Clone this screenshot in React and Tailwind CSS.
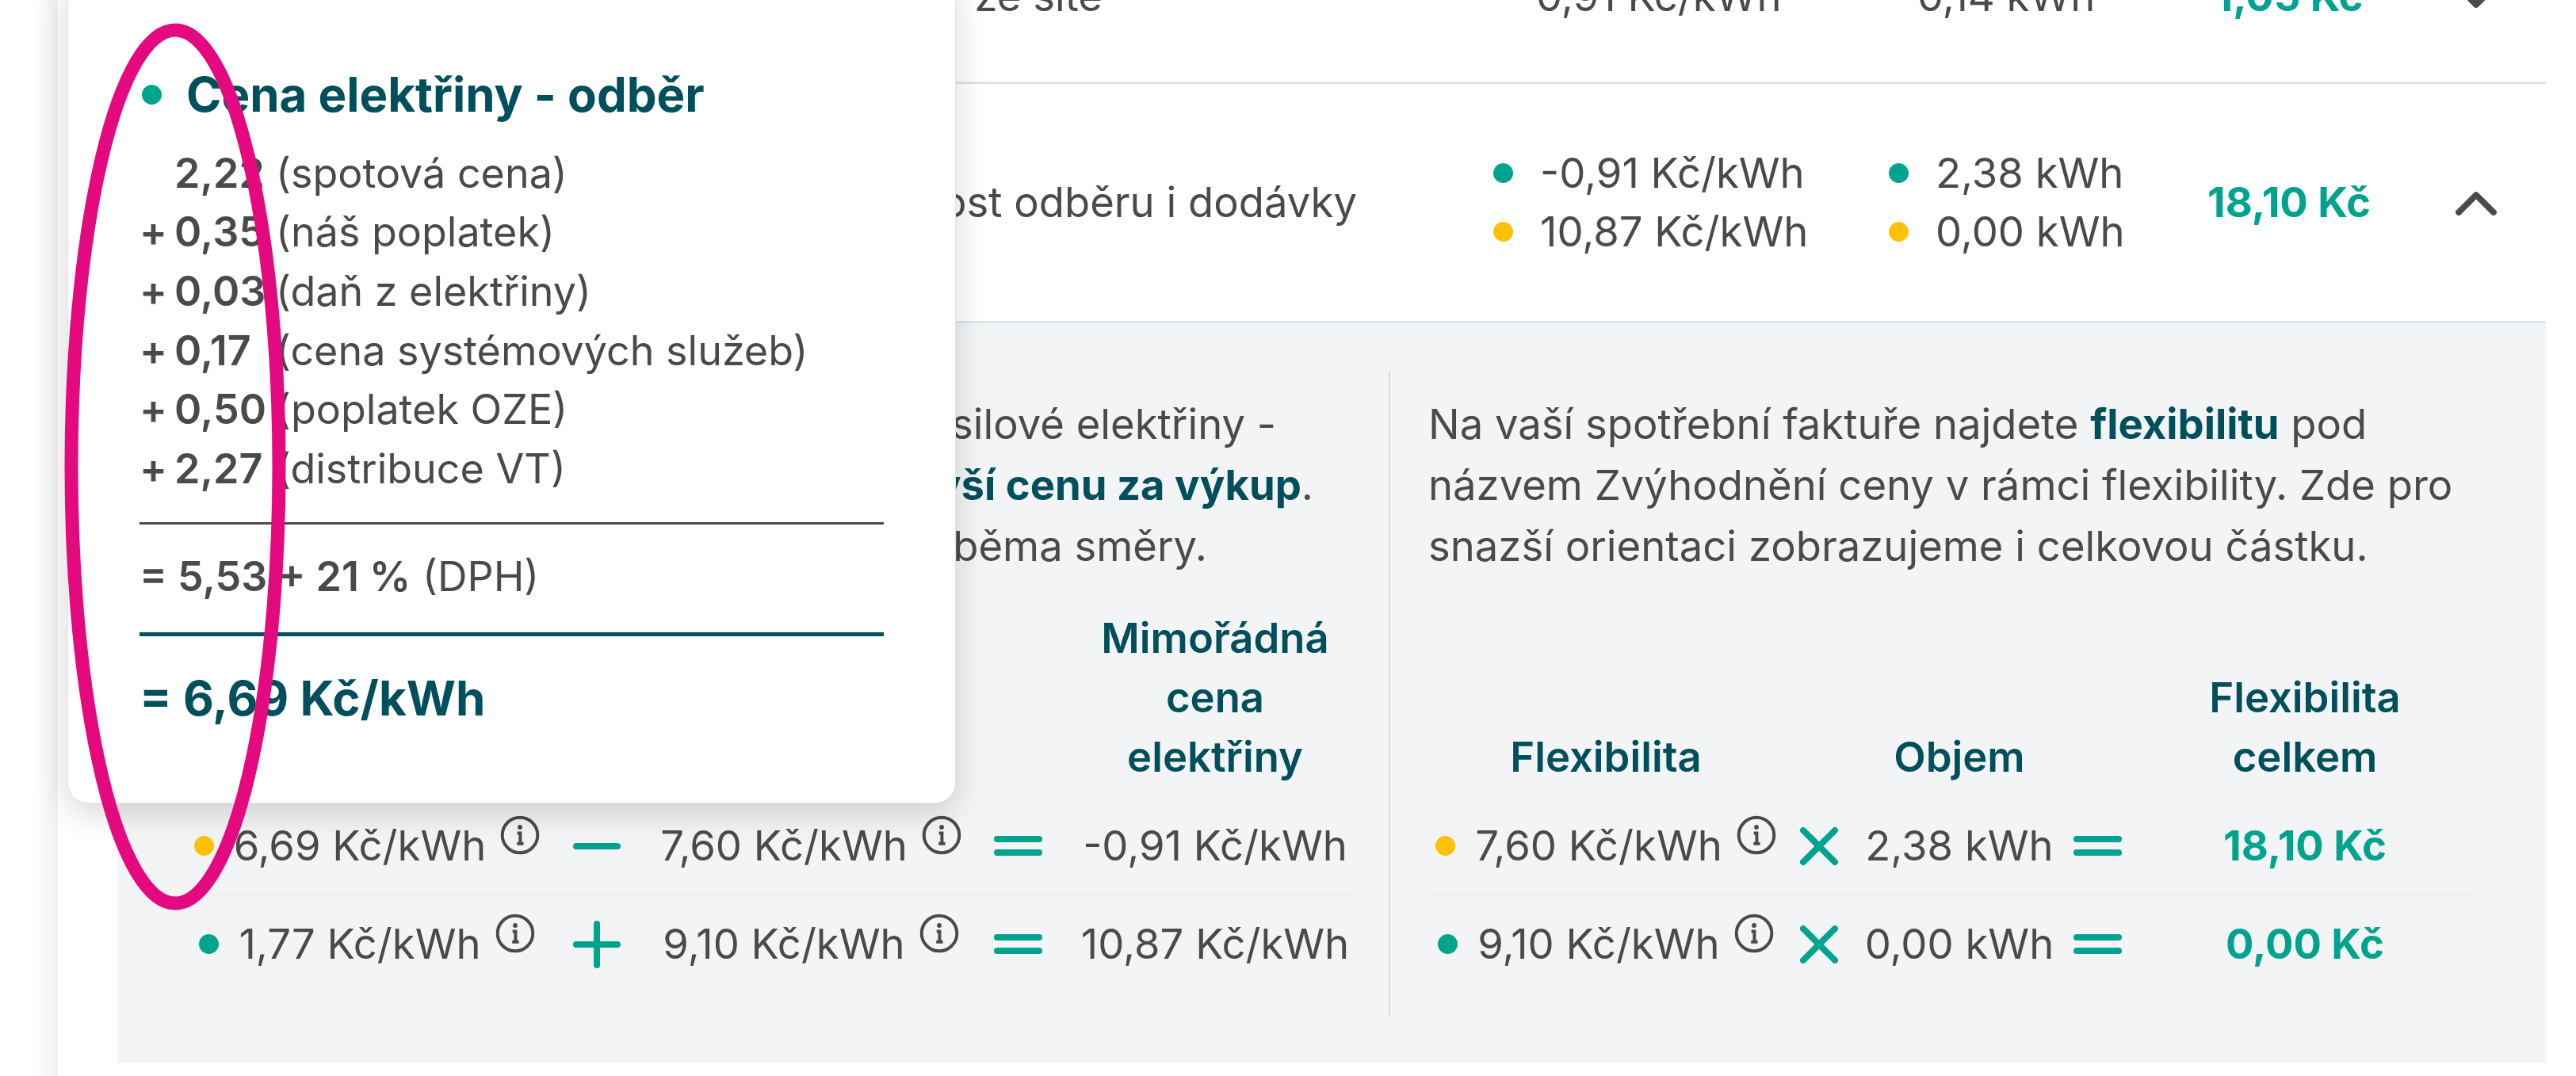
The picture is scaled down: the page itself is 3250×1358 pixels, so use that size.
import { ChevronDown, ChevronUp } from "lucide-react";

const GREEN = "bg-[#00a38d]";
const YELLOW = "bg-[#ffc107]";

function Dot({ color, className = "" }) {
  return <span className={`inline-block w-[25px] h-[25px] rounded-full shrink-0 ${color} ${className}`} />;
}

function InfoIcon() {
  return (
    <svg width="50" height="50" viewBox="0 0 24 24" fill="none" stroke="#4a4a4a" strokeWidth="1.9" className="shrink-0 -mt-[28px] ml-[18px]">
      <circle cx="12" cy="12" r="10.7" />
      <circle cx="12" cy="7.2" r="1.4" fill="#4a4a4a" stroke="none" />
      <path d="M10.4 10.8h1.8v6.2M10.2 17.2h4" />
    </svg>
  );
}

function Minus() {
  return (
    <svg width="60" height="8" viewBox="0 0 60 8" stroke="#00a38d" strokeWidth="8" strokeLinecap="round">
      <path d="M4 4h52" />
    </svg>
  );
}

function Plus() {
  return (
    <svg width="60" height="60" viewBox="0 0 60 60" stroke="#00a38d" strokeWidth="8" strokeLinecap="round">
      <path d="M4 30h52M30 4v52" />
    </svg>
  );
}

function Equals() {
  return (
    <span className="flex flex-col gap-[9px] w-[61px]">
      <span className="h-[8px] rounded-full bg-[#00a38d]" />
      <span className="h-[8px] rounded-full bg-[#00a38d]" />
    </span>
  );
}

function Times() {
  return (
    <svg width="48" height="48" viewBox="0 0 48 48" fill="none" stroke="#00a38d" strokeWidth="8" strokeLinecap="round">
      <path d="M4 4l40 40M44 4L4 44" />
    </svg>
  );
}

function Price({ dot, value }) {
  return (
    <div className="flex items-center justify-center whitespace-nowrap">
      {dot && <Dot color={dot} className="mr-[25px]" />}
      <span>{value}</span>
      <InfoIcon />
    </div>
  );
}

function Center({ children, className = "" }) {
  return <div className={`flex items-center justify-center whitespace-nowrap ${className}`}>{children}</div>;
}

function ListRow({ plus, num, text }) {
  return (
    <div className="flex h-[74.6px] items-center whitespace-nowrap">
      <span className="w-[44px] font-semibold">{plus}</span>
      <span className="w-[128px] font-semibold">{num}</span>
      <span>{text}</span>
    </div>
  );
}

function ValueLine({ dot, children }) {
  return (
    <div className="flex items-center whitespace-nowrap h-[74.6px]">
      <Dot color={dot} className="mr-[34px]" />
      {children}
    </div>
  );
}

const leftCols = "grid grid-cols-[406px_174px_366px_156px_342px] ml-[112px] w-[1444px]";
const rightCols = "grid grid-cols-[448px_90px_264px_84px_440px] w-[1320px]";

export default function App() {
  return (
    <div className="relative h-[1358px] overflow-hidden bg-white font-['Inter',sans-serif] text-[52.6px] leading-[77px] text-[#4a4a4a]">
      <div className="ml-[73px] pl-[75px] pr-[38px] pb-[60px] -mt-[113px] bg-white shadow-[-10px_0_30px_rgba(0,0,0,0.08)]">
        {/* Top row, cut off by the page edge */}
        <div className="flex items-center h-[219px] border-b-[3px] border-[#dde4ea]">
          <div className="w-[1736px] pr-[493px] text-right whitespace-nowrap">ze sítě</div>
          <div className="w-[499px] pl-[54px] whitespace-nowrap">0,91 Kč/kWh</div>
          <div className="w-[357px] pl-[36px] whitespace-nowrap">0,14 kWh</div>
          <div className="w-[296px] text-center font-bold text-[#00a38d] whitespace-nowrap">1,05 Kč</div>
          <div className="flex-1 flex justify-center">
            <ChevronDown size={88} strokeWidth={2.1} color="#4a4a4a" />
          </div>
        </div>

        {/* Expanded row */}
        <div className="flex items-center h-[302px] border-b-[3px] border-[#dde4ea]">
          <div className="w-[1736px] pr-[172px] text-right whitespace-nowrap">možnost odběru i dodávky</div>
          <div className="w-[499px]">
            <ValueLine dot={GREEN}>-0,91 Kč/kWh</ValueLine>
            <ValueLine dot={YELLOW}>10,87 Kč/kWh</ValueLine>
          </div>
          <div className="w-[357px]">
            <ValueLine dot={GREEN}>2,38 kWh</ValueLine>
            <ValueLine dot={YELLOW}>0,00 kWh</ValueLine>
          </div>
          <div className="w-[296px] text-center font-bold text-[#00a38d] whitespace-nowrap">18,10 Kč</div>
          <div className="flex-1 flex justify-center pt-[2px]">
            <ChevronUp size={88} strokeWidth={2.1} color="#4a4a4a" />
          </div>
        </div>

        {/* Detail panel */}
        <div className="flex bg-[#f3f4f6] py-[60px] h-[933px]">
          <div className="w-[1606px] border-r-2 border-[#cfdbe0]">
            <div className="mt-[29px] h-[231px] text-right whitespace-nowrap">
              <div className="pr-[142px]">silové elektřiny -</div>
              <div className="pr-[95px]">
                <b className="font-bold text-[#004f5c]">vší cenu za výkup</b>.
              </div>
              <div className="pr-[229px]">oběma směry.</div>
            </div>
            <div className={`${leftCols} mt-[40px] items-end font-semibold text-[#004f5c] leading-[75px] text-center h-[239px] pb-[14px]`}>
              <div className="col-start-5">
                Mimořádná
                <br />
                cena
                <br />
                elektřiny
              </div>
            </div>
            <div className={`${leftCols} h-[123px] items-center border-b-2 border-[#e8eaed]`}>
              <Price dot={YELLOW} value="6,69 Kč/kWh" />
              <Center><Minus /></Center>
              <Price value="7,60 Kč/kWh" />
              <Center><Equals /></Center>
              <Center>-0,91 Kč/kWh</Center>
            </div>
            <div className={`${leftCols} h-[123px] items-center`}>
              <Price dot={GREEN} value="1,77 Kč/kWh" />
              <Center><Plus /></Center>
              <Price value="9,10 Kč/kWh" />
              <Center><Equals /></Center>
              <Center>10,87 Kč/kWh</Center>
            </div>
          </div>

          <div className="pl-[48px]">
            <div className="mt-[29px] h-[231px] whitespace-nowrap">
              Na vaší spotřební faktuře najdete <b className="font-bold text-[#004f5c]">flexibilitu</b> pod
              <br />
              názvem Zvýhodnění ceny v rámci flexibility. Zde pro
              <br />
              snazší orientaci zobrazujeme i celkovou částku.
            </div>
            <div className={`${rightCols} mt-[40px] items-end font-semibold text-[#004f5c] leading-[75px] text-center h-[239px] pb-[14px]`}>
              <div>Flexibilita</div>
              <div />
              <div>Objem</div>
              <div />
              <div>
                Flexibilita
                <br />
                celkem
              </div>
            </div>
            <div className={`${rightCols} h-[123px] items-center border-b-2 border-[#e8eaed]`}>
              <Price dot={YELLOW} value="7,60 Kč/kWh" />
              <Center><Times /></Center>
              <Center>2,38 kWh</Center>
              <Center><Equals /></Center>
              <Center className="font-bold text-[#00a38d]">18,10 Kč</Center>
            </div>
            <div className={`${rightCols} h-[123px] items-center`}>
              <Price dot={GREEN} value="9,10 Kč/kWh" />
              <Center><Times /></Center>
              <Center>0,00 kWh</Center>
              <Center><Equals /></Center>
              <Center className="font-bold text-[#00a38d]">0,00 Kč</Center>
            </div>
          </div>
        </div>
      </div>

      {/* Popover over the table */}
      <div className="absolute left-[85px] top-[-30px] w-[1121px] h-[1044px] bg-white rounded-[26px] border border-[#dfe5ec] shadow-[0_12px_40px_rgba(0,0,0,0.16)] px-[90px] pt-[110px] text-[52px]">
        <div className="flex items-center text-[#004f5c] font-bold text-[60px] leading-[76px]">
          <Dot color={GREEN} className="mr-[31px] ml-[3px]" />
          Cena elektřiny - odběr
        </div>
        <div className="mt-[24px]">
          <ListRow num="2,22" text="(spotová cena)" />
          <ListRow plus="+" num="0,35" text="(náš poplatek)" />
          <ListRow plus="+" num="0,03" text="(daň z elektřiny)" />
          <ListRow plus="+" num="0,17" text="(cena systémových služeb)" />
          <ListRow plus="+" num="0,50" text="(poplatek OZE)" />
          <ListRow plus="+" num="2,27" text="(distribuce VT)" />
        </div>
        <div className="mt-[30px] h-[3px] bg-[#4a4a4a]" />
        <div className="mt-[29px] h-[74.6px] flex items-center whitespace-pre">
          <span className="font-semibold">= 5,53 + 21 %</span> (DPH)
        </div>
        <div className="mt-[33px] h-[5px] bg-[#004f5c]" />
        <div className="mt-[40px] text-[#004f5c] font-bold text-[60px] leading-[76px] whitespace-nowrap">= 6,69 Kč/kWh</div>
      </div>

      {/* Hand drawn marker on top of the screenshot */}
      <svg width="400" height="1200" viewBox="0 0 400 1200" fill="none" className="absolute left-0 top-0 pointer-events-none">
        <ellipse cx="221" cy="589" rx="131" ry="551" stroke="#e5097f" strokeWidth="17" />
      </svg>
    </div>
  );
}
